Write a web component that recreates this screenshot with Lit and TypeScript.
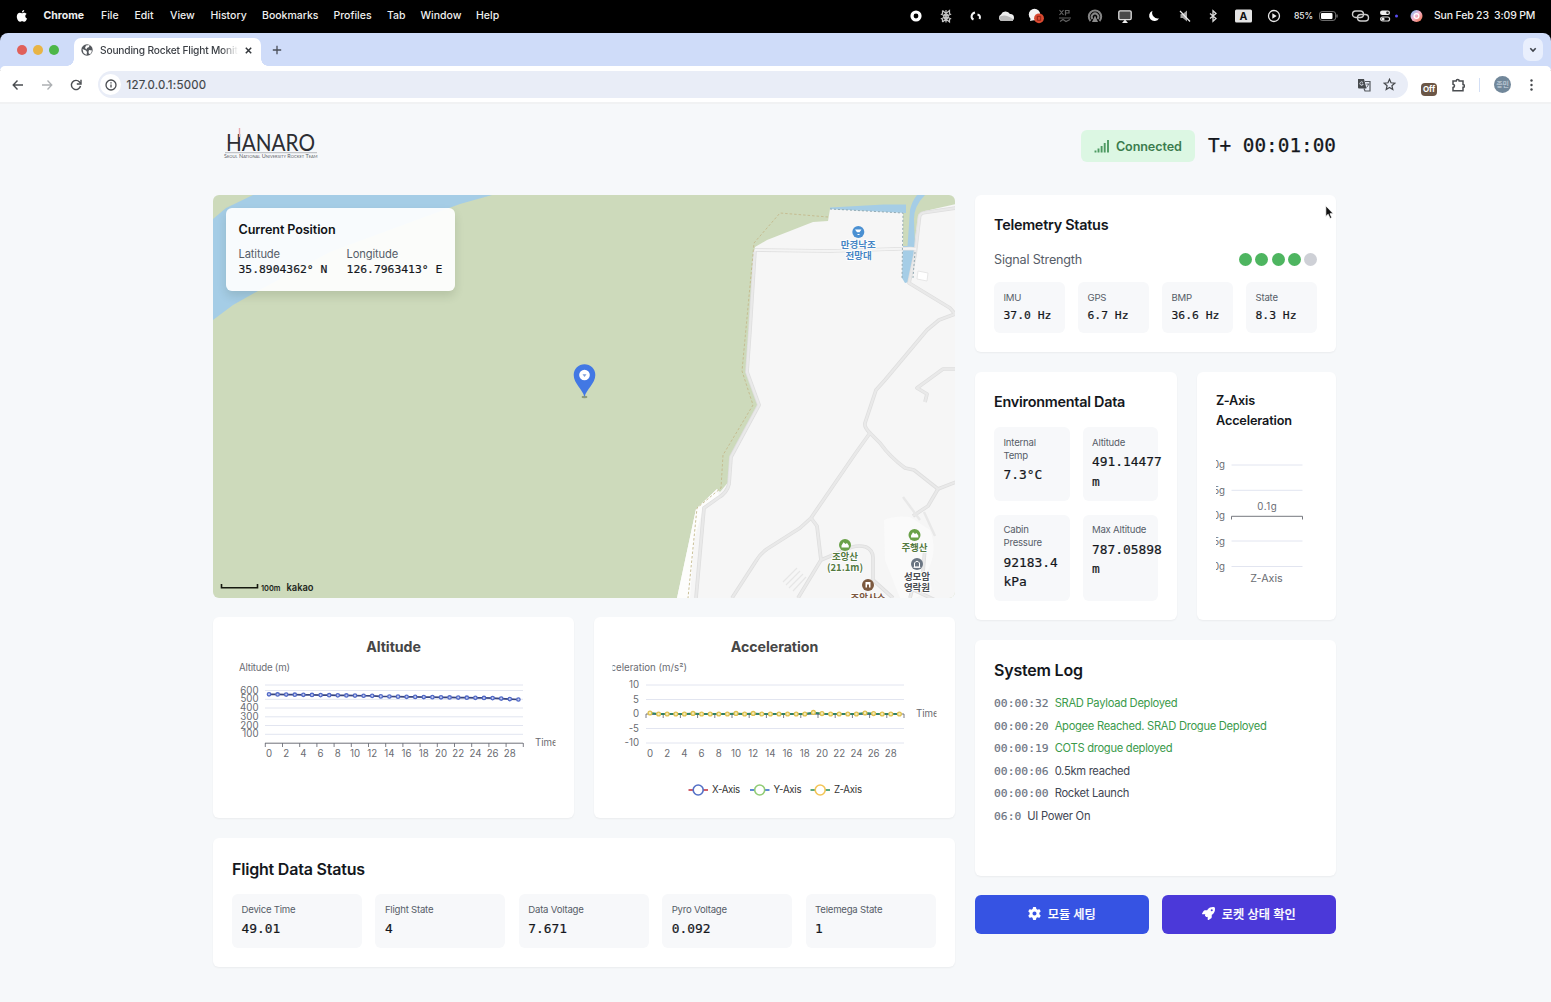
import { LitElement, html, svg, css } from "lit";
import { customElement } from "lit/decorators.js";
import { styleMap } from "lit/directives/style-map.js";

const base = css`
  * { box-sizing: border-box; }
  svg { display: block; }
  text { font-family: Inter, "Noto Sans CJK KR", sans-serif; }
`;

const MENUS: [string, number][] = [
  ["Chrome", 57.5], ["File", 33.5], ["Edit", 35.5], ["View", 40.5], ["History", 51.5],
  ["Bookmarks", 71.5], ["Profiles", 53.5], ["Tab", 33.5], ["Window", 55.5], ["Help", 30],
];

const STATUS_ICONS = [
  svg`<circle cx="10" cy="10" r="4" fill="none" stroke="#fff" stroke-width="3.2"/>`,
  svg`<g fill="none" stroke="#c4c4c4" stroke-width="1.2"><circle cx="10" cy="10.500" r="2.300"/><path d="M10 4v12.500M4.800 8l10.400 5M4.800 13l10.400-5M6.500 4.500l3.500 3 3.500-3v3.500M6.500 4.500v3.500M6.500 16l3.500-3 3.500 3v-3M6.500 16v-3"/></g>`,
  svg`<path d="M9 6.500c-4 1-4.500 5.500-1.500 7M11.500 8.500c2.500.5 3 2.500 2 4.500" fill="none" stroke="#f4f4f4" stroke-width="2"/>`,
  svg`<path d="M5 15a3.600 3.600 0 0 1 0-6.500A5 5 0 0 1 14 8a3.600 3.600 0 0 1 1.500 7z" fill="#eee"/><path d="M3 11q6-4 14 2v2H5z" fill="#bbb"/>`,
  svg`<circle cx="8.500" cy="8.500" r="5.700" fill="#f4f4f4"/><path d="M4 15l1-4 4 3z" fill="#f4f4f4"/><circle cx="13" cy="12.300" r="4.900" fill="#d94a31"/><path d="M11.300 10.300h3.400v4h-3.400z" fill="none" stroke="#8f2114" stroke-width="1"/>`,
  svg`<g fill="none" stroke="#626262" stroke-width="1.200"><path d="M4.500 4l4 5M8.500 4l-4 5M10.500 9.500V4.500h3.500v2.500h-3.500M4 12h12M5 15.500l3-2 3 2 4-2"/></g>`,
  svg`<g fill="none" stroke="#858585" stroke-width="2"><path d="M5.500 15a6.200 6.200 0 1 1 9 0M7.500 13a3.300 3.300 0 1 1 5 0"/></g><path d="M10 9.500l3 6.500H7z" fill="#8b8b8b"/>`,
  svg`<rect x="3.800" y="4.800" width="12.400" height="8.800" rx="1.300" fill="#4a4a4a" stroke="#ddd" stroke-width="1.300"/><path d="M7 17l3-3.500 3 3.500z" fill="#eee"/>`,
  svg`<path d="M7.500 4.800a5.300 5.300 0 1 0 6.600 7.400A5.600 5.600 0 0 1 7.500 4.800z" fill="#fff"/>`,
  svg`<path d="M5.500 8h2.300L12 4.500v11L7.800 12H5.500z" fill="#a5a5a5"/><path d="M5 5l10 10.500" stroke="#eee" stroke-width="1.200"/>`,
  svg`<path d="M5 7.500l6 5-3 2.700V4.800l3 2.700-6 5" fill="none" stroke="#ddd" stroke-width="1.300"/>`,
  svg`<rect x="0" y="3.500" width="17" height="13" rx="1.500" fill="#e4e4e4"/><text x="8.500" y="13.900" text-anchor="middle" font-size="10.500" font-weight="700" fill="#111">A</text>`,
  svg`<circle cx="9" cy="10" r="5.500" fill="none" stroke="#e8e8e8" stroke-width="1.300"/><path d="M7.300 7.200l4.400 2.800-4.400 2.800z" fill="#eee"/>`,
];

@customElement("mac-menubar")
class MacMenubar extends LitElement {
  static styles = [base, css`
    :host { display: flex; height: 33px; background: #000; color: #efefef; align-items: center;
      font: 500 10.500px/32px Inter, sans-serif; padding-bottom: 2px; white-space: nowrap; }
    .apple { width: 43.500px; padding-left: 14.500px; }
    .menu { flex: none; }
    .menu:first-of-type { font-weight: 700; }
    .spacer { flex: 1; }
    .status { display: flex; width: 393px; }
    .cell { width: 29.9px; display: flex; justify-content: center; }
    .pct { font-size: 8.600px; width: 25px; letter-spacing: -.1px; }
    .batt { width: 32px; }
    .link { width: 28px; }
    .ctl { width: 31px; }
    .siri { width: 24px; }
    .clock { width: 117px; letter-spacing: -.17px; white-space: pre; }
  `];
  render() {
    return html`
      <div class="apple"><svg width="14" height="14" viewBox="0 0 14 14"><path fill="#fff" d="M9.200 1c.1 1.300-1 2.500-2.300 2.500C6.800 2.200 8 1.100 9.200 1zM7 4.200c.6 0 1.200-.5 2.200-.5 1.100 0 2 .6 2.400 1.300-2 1.200-1.600 3.800.5 4.600-.5 1.400-1.600 3.200-2.800 3.200-.8 0-1.200-.5-2.200-.5s-1.400.5-2.200.5C3.400 12.800 1.800 10 1.800 7.600c0-2.400 1.500-3.800 3-3.800.9 0 1.600.4 2.200.4z"/></svg></div>
      ${MENUS.map(([t, w]) => html`<span class="menu" style=${styleMap({ width: w + "px" })}>${t}</span>`)}
      <div class="spacer"></div>
      <div class="status">${STATUS_ICONS.map((i) => html`<div class="cell"><svg width="20" height="20" viewBox="0 0 20 20">${i}</svg></div>`)}</div>
      <span class="pct">85%</span>
      <svg class="batt" width="32" height="12" viewBox="0 0 32 12"><rect x=".6" y="1.600" width="16" height="8.800" rx="2.500" fill="none" stroke="#777"/><rect x="2" y="3" width="11.500" height="6" rx="1" fill="#fff"/><path d="M18 4.500v3" stroke="#777" stroke-width="1.300"/></svg>
      <svg class="link" width="28" height="14" viewBox="0 0 28 14"><g fill="none" stroke="#ccc" stroke-width="1.400"><rect x="1.500" y="2" width="11" height="6.500" rx="3.200"/><rect x="6.500" y="5.500" width="11" height="6.500" rx="3.200"/></g></svg>
      <svg class="ctl" width="31" height="14" viewBox="0 0 31 14"><rect x="1" y="1.500" width="10" height="4.500" rx="2.200" fill="#eee"/><circle cx="8.500" cy="3.700" r="1.300" fill="#222"/><rect x="1.600" y="8" width="9" height="4" rx="2" fill="none" stroke="#ddd" stroke-width="1.200"/><circle cx="4" cy="10" r="1.600" fill="#eee"/><circle cx="17.500" cy="7" r="1.500" fill="#5a4df0"/></svg>
      <svg class="siri" width="24" height="14" viewBox="0 0 24 14"><defs><linearGradient id="s" x1="0" y1="0" x2="1" y2="1"><stop offset="0" stop-color="#5fb4f5"/><stop offset=".45" stop-color="#f3b6d4"/><stop offset="1" stop-color="#ef6a3b"/></linearGradient></defs><circle cx="6.500" cy="7" r="6" fill="url(#s)"/><circle cx="6.500" cy="7" r="2.400" fill="none" stroke="#fff" stroke-width="1.200"/></svg>
      <span class="clock">Sun Feb 23  3:09 PM</span>`;
  }
}

@customElement("browser-chrome")
class BrowserChrome extends LitElement {
  static styles = [base, css`
    :host { display: block; background: #000; font-family: Inter, sans-serif; }
    .strip { height: 37px; background: #cfdcf9; border-radius: 8px 8px 0 0; display: flex; align-items: flex-start; padding: 5px 7px 0 16.500px; margin-bottom: -4px; }
    .lights { display: flex; gap: 6.300px; padding-top: 7px; width: 57.500px; }
    .light { width: 10px; height: 10px; border-radius: 50%; background: #e0605a; }
    .light:nth-child(2) { background: #e8b445; }
    .light:nth-child(3) { background: #4db748; }
    .tab { width: 187px; height: 28px; background: #fff; border-radius: 7px 7px 0 0; display: flex; align-items: center; padding: 0 7px; position: relative; }
    .tab::before, .tab::after { content: ""; position: absolute; bottom: 0; width: 7px; height: 7px; }
    .tab::before { left: -7px; background: radial-gradient(circle at 0 0, transparent 6.500px, #fff 7px); }
    .tab::after { right: -7px; background: radial-gradient(circle at 100% 0, transparent 6.500px, #fff 7px); }
    .fav { margin-top: -4px; }
    .title { flex: 1; min-width: 0; font-size: 10.200px; letter-spacing: -.17px; font-weight: 500; color: #3b3f45; margin: -4px 6px 0 7px; overflow: hidden; white-space: nowrap;
      -webkit-mask-image: linear-gradient(90deg, #000 88%, transparent 100%); }
    .x { margin: -4px 1px 0 0; }
    .plus { margin: 7px 0 0 11px; }
    .spacer { flex: 1; }
    .drop { width: 20px; height: 23px; margin-right: 1px; border-radius: 7px; background: #e9effd; display: flex; align-items: center; justify-content: center; }
    .bar { height: 38px; background: #fff; border-bottom: 2px solid #f1f2f3; border-radius: 5px 5px 0 0; display: flex; align-items: center; padding: 1px 12px 0 11px; position: relative; }
    .nav { display: flex; gap: 15px; width: 87px; }
    .omni { width: 1310px; height: 27px; border-radius: 14px; background: #e9edf7; display: flex; align-items: center; padding: 0 12px 0 2px; }
    .info { width: 21px; height: 21px; border-radius: 50%; background: #fff; display: flex; align-items: center; justify-content: center; }
    .url { flex: 1; font-size: 11.600px; color: #414549; padding-left: 5.500px; letter-spacing: .25px; -webkit-text-stroke: .15px #414549; }
    .star { margin-left: 12px; }
    .right { flex: 1; display: flex; align-items: center; justify-content: space-between; padding-left: 13px; }
    .off { width: 16px; height: 13px; margin-top: 9px; border-radius: 4px; background: #6b5646; color: #fff; font: 700 8px/13px Inter, sans-serif; text-align: center; }
    .sep { width: 1.500px; height: 14px; background: #d3dff5; }
    .avatar { width: 17px; height: 17px; border-radius: 50%; background: #71879a; color: #b7c4d0; font: 600 7px/16px "Noto Sans CJK KR", sans-serif; text-align: center; }
  `];
  render() {
    return html`
      <div class="strip">
        <div class="lights"><i class="light"></i><i class="light"></i><i class="light"></i></div>
        <div class="tab">
          <svg class="fav" width="12" height="12" viewBox="0 0 12 12"><circle cx="6" cy="6" r="5.700" fill="#53575c"/><path d="M1.500 5l3.500 1.500 1 1.500-.5 3L2.500 9zM5 1.500L8.500 1 8 3 6 4 5.500 5.500 4 4zM8 6l3 .5-1 3-2 .5-.5-2z" fill="#fff"/></svg>
          <span class="title">Sounding Rocket Flight Monitor</span>
          <svg class="x" width="9" height="9" viewBox="0 0 9 9"><path d="M1.800 1.800l5.400 5.400M7.200 1.800L1.800 7.200" stroke="#33373b" stroke-width="1.500"/></svg>
        </div>
        <svg class="plus" width="10" height="10" viewBox="0 0 10 10"><path d="M5 .8v8.400M.8 5h8.400" stroke="#4a4e58" stroke-width="1.300"/></svg>
        <div class="spacer"></div>
        <div class="drop"><svg width="8" height="6" viewBox="0 0 8 6"><path d="M1.300 1.300L4 4l2.700-2.700" fill="none" stroke="#3e434b" stroke-width="1.600"/></svg></div>
      </div>
      <div class="bar">
        <div class="nav">
          <svg width="14" height="14" viewBox="0 0 14 14"><path d="M12 7H2.500M6.500 2.500L2.200 7l4.300 4.500" fill="none" stroke="#4a4d51" stroke-width="1.400"/></svg>
          <svg width="14" height="14" viewBox="0 0 14 14"><path d="M2 7h9.500M7.500 2.500L11.800 7l-4.300 4.500" fill="none" stroke="#adb0b3" stroke-width="1.300"/></svg>
          <svg width="14" height="14" viewBox="0 0 14 14"><path d="M11.500 8A4.600 4.600 0 1 1 10.500 4L11.700 5.200" fill="none" stroke="#4a4d51" stroke-width="1.400"/><path d="M12 1.800V6H7.800" fill="none" stroke="#4a4d51" stroke-width="1.400"/></svg>
        </div>
        <div class="omni">
          <div class="info"><svg width="12" height="12" viewBox="0 0 12 12"><circle cx="6" cy="6" r="5" fill="none" stroke="#4a4d51" stroke-width="1.300"/><path d="M6 5.400v3.200M6 3.200v1.200" stroke="#4a4d51" stroke-width="1.300"/></svg></div>
          <span class="url">127.0.0.1:5000</span>
          <svg width="14" height="14" viewBox="0 0 14 14"><path d="M1 1h6l2.500 9.500H2a1 1 0 0 1-1-1z" fill="#474a4e"/><path d="M8 3.500h5v9.500H8l-1-2.500" fill="none" stroke="#54585d" stroke-width="1.200"/><path d="M6 4.600A1.700 1.700 0 1 0 6.200 6.200H4.800" fill="none" stroke="#dde1ea" stroke-width=".9"/><path d="M9.300 6h3M11.500 6q-.5 2-2 3.500" stroke="#54585d" fill="none" stroke-width=".9"/></svg>
          <svg class="star" width="13" height="13" viewBox="0 0 13 13"><path d="M6.500 1.300l1.500 3.500 3.800.4-2.900 2.500.9 3.800-3.300-2-3.300 2 .9-3.800L1.200 5.200 5 4.800z" fill="none" stroke="#44474b" stroke-width="1.200"/></svg>
        </div>
        <div class="right">
          <div class="off">Off</div>
          <svg width="14" height="14" viewBox="0 0 14 14"><path d="M2 3h3.200a1.500 1.500 0 0 1 3 0H12v3.500a1.300 1.300 0 0 1 0 2.800V12.700H2V9.500c2-.3 2-3 0-3.300z" fill="none" stroke="#4a4d51" stroke-width="1.500"/></svg>
          <div class="sep"></div>
          <div class="avatar">종민</div>
          <svg width="14" height="14" viewBox="0 0 14 14"><g fill="#44474b"><circle cx="6.500" cy="2.500" r="1.200"/><circle cx="6.500" cy="7" r="1.200"/><circle cx="6.500" cy="11.500" r="1.200"/></g></svg>
        </div>
      </div>`;
  }
}

const LAND = "M830 209L828 221L813 222L767 240L755 247L753 260L747 373L759 405L731 457L730 480L720 492L717 489L696 509L677 598H956V204L925 211L918 215L914 245L903 250L903 212Z";
const ROADS = [
  "M755 250L830 251L910 248.500L916 249",
  "M755 250L750 330L747 372L759 405L731 457L729 484Q727 493 718 498L704 508L696 598",
  "M956 208L925 212.500Q920 213 919.500 217L915 255L909 283L950 308L956 315",
  "M955 314L939 320L927 330L885 380L876 390L865 423Q864 427 870 433",
  "M956 369H943L917 388L927 394L925 402",
  "M870 433L855 454L811 518L800 528L767 549Q760 554 756 561L732 598",
  "M870 433L880 443Q890 457 905 468L914 470L938 489L956 482",
  "M938 489L928 506L913 516",
  "M811 518L817 526L821 560L798 598",
  "M821 560L845 550Q856 544 866 547Q873 550 873 558V580L893 598",
  "M910 598L914 583M914 590L935 600M925 548L923 572",
];
const LANES = "M903 497L920 520M924 512L935 536";

const peak = (x: number, y: number) => svg`<circle cx=${x} cy=${y} r="6" fill="#6aa149"/><path d=${`M${x - 3.5} ${y + 2.5}v-2l2-3.200 2 1.700 1.500-1 1.800 2.500v2z`} fill="#fff"/>`;

@customElement("flight-map")
class FlightMap extends LitElement {
  static styles = [base, css`
    :host { display: block; height: 403px; position: relative; border-radius: 6px; overflow: hidden; font-family: Inter, sans-serif; }
    .ko { font-family: "Noto Sans CJK KR", sans-serif; font-weight: 700; text-anchor: middle; paint-order: stroke; stroke: #fff; stroke-width: 1.500px; font-size: 9.500px; }
    .card { position: absolute; left: 13px; top: 13px; width: 229px; height: 83px; border-radius: 6px; background: rgba(255,255,255,.92); box-shadow: 0 5px 10px rgba(40,60,30,.14); padding: 11.500px 12.500px; }
    .title { font-weight: 600; font-size: 12.600px; line-height: 20px; color: #101318; letter-spacing: -.1px; }
    .cols { display: flex; gap: 19.300px; margin-top: 7px; line-height: 15.500px; }
    .label { font-size: 11.200px; letter-spacing: -.15px; color: #565d68; }
    .value { font: 11.350px/15.500px "DejaVu Sans Mono", monospace; color: #15181d; white-space: pre; -webkit-text-stroke: .2px; }
  `];
  render() {
    return html`
      <svg width="742" height="403" viewBox="213 195 742 403">
        <rect x="213" y="195" width="742" height="403" fill="#cddabb"/>
        <path d="M213 219L226 208L253 195H492L460 204L330 252L258 291L233 305L213 320Z" fill="#a5cde6"/>
        <path d="M906 204H926V240H906z" fill="#cddabb"/>
        <path d=${LAND} fill="#f6f6f6"/>
        <path d="M696 509L717 489L719 496L704 506L694 540L690 598H677Z" fill="#fdfdfc"/>
        <path d="M884 520Q895 515 910 517L930 530Q938 550 928 570L932 590L915 598H900L885 560Z" fill="#fafafa"/>
        <path d="M903 212V205L918 199V215L914 245H903z" fill="#cddabb"/>
        <path d="M830 207.500L884 204.500H906V213L830 209z" fill="#a5cde6"/>
        <path d="M917 195H925Q914 206 914 219L915 248L912 270L909 282L905 283L902 278L903 246H907.500L910 210Q912 201 917 195z" fill="#a5cde6"/>
        <g fill="none" stroke-linejoin="round">
          ${ROADS.map((d) => svg`<path d=${d} stroke="#dedede" stroke-width="3.700"/>`)}
          ${ROADS.map((d) => svg`<path d=${d} stroke="#e9e9e9" stroke-width="2.200"/>`)}
          <path d=${LANES} stroke="#e8e8e8" stroke-width="2.400"/>
          <path d="M755 250L830 251L910 248.500L916 249" stroke="#f4f4f4" stroke-width="1.800"/>
          <path d="M828 217L780 213L754 243L742 371L753 405L723 455L721 488L697 508L688 598" stroke="#c4b98c" stroke-width=".9" stroke-dasharray="2.500 2"/>
          <path d="M830 209L903 213L902 278M915 252L913 278" stroke="#8aa3ad" stroke-width=".9" stroke-dasharray="2 2"/>
          <path d="M783 582L797 568M786 585L800 571M789 588L803 574M793 591L806 577" stroke="#e6e6e6" stroke-width="1.200"/>
        </g>
        <path d="M918 271l10 2-1 8-10-2z" fill="#fff" stroke="#e2e2e2" stroke-width=".8"/>
        <circle cx="858.300" cy="232" r="6" fill="#4a90d2"/><path d="M855 229.500h6.500l-2 2.800h-2.500zM857.500 234h2v1h-2z" fill="#fff"/>
        <text class="ko" x="858.300" y="248" fill="#4585c4">만경낙조</text>
        <text class="ko" x="858.600" y="258.700" fill="#4585c4">전망대</text>
        ${peak(845, 545)}${peak(914.5, 535)}
        <text class="ko" x="845" y="560.300" fill="#53793f">조앙산</text>
        <text class="ko" x="845" y="571" fill="#53793f">(21.1m)</text>
        <text class="ko" x="914.500" y="551" fill="#53793f">주행산</text>
        <circle cx="917" cy="564" r="6" fill="#6b7683"/><path d="M914.500 567v-4q2.500-3.500 5 0v4zM913.500 567.300h7" fill="#6b7683" stroke="#fff" stroke-width="1"/>
        <text class="ko" x="917" y="580" fill="#4a4d52">성모암</text>
        <text class="ko" x="917" y="590.500" fill="#4a4d52">영락원</text>
        <circle cx="868" cy="585" r="6" fill="#7c593f"/><path d="M865.500 582h5v5.500h-1.500v-3h-2v3h-1.500z" fill="#fff"/>
        <text class="ko" x="868" y="600.500" fill="#7c593f">조앙사스</text>
        <ellipse cx="584.500" cy="397" rx="3" ry="1.200" fill="#8e9b79"/>
        <path d="M584.500 397C582.500 389 573.700 383.500 573.700 375a10.800 10.800 0 0 1 21.600 0C595.300 383.500 586.500 389 584.500 397z" fill="#4278e4"/>
        <circle cx="584.500" cy="375" r="5.300" fill="#fff"/><path d="M582.500 374.300h4l-2 2.700z" fill="#7e9fd9"/>
        <path d="M221.500 584V587.700H257.500V584" fill="none" stroke="#16180f" stroke-width="1.600"/>
        <text x="261" y="590.600" font-size="8" font-weight="600" fill="#22261b" textLength="19.500" lengthAdjust="spacingAndGlyphs">100m</text>
        <text x="286.500" y="590.700" font-size="9.800" font-weight="600" fill="#22261b" textLength="27" lengthAdjust="spacingAndGlyphs">kakao</text>
      </svg>
      <div class="card">
        <div class="title">Current Position</div>
        <div class="cols">
          <div><div class="label">Latitude</div><div class="value">35.8904362° N</div></div>
          <div><div class="label">Longitude</div><div class="value">126.7963413° E</div></div>
        </div>
      </div>`;
  }
}

const chartStyles = css`
  :host { display: block; }
  .t { font-weight: 700; font-size: 14.200px; fill: #464646; text-anchor: middle; letter-spacing: -.05px; }
  .a { font-size: 9.700px; fill: #6a6c72; }
  .e { text-anchor: end; }
  .m { text-anchor: middle; }
  .l { font-size: 9.700px; fill: #333; }
`;
const idx = (n: number) => Array.from({ length: n }, (_, i) => i);
const ALT = idx(30).map((i) => 694.3 + i * 0.13 + (i > 12 ? 0.4 : 0) + (i > 26 ? (i - 26) * 0.35 : 0));
const BUMP: Record<number, number> = { 0: -1, 5: -0.6, 10: -0.6, 12: -0.6, 19: -1.6, 20: -0.4, 25: -1, 26: -0.4 };
const ACC = idx(30).map((i) => 714 + (BUMP[i] ?? 0));
const line = (ys: number[], x0: number) => ys.map((y, i) => `${i ? "L" : "M"}${x0 + i * 8.6} ${y}`).join("");

@customElement("altitude-chart")
class AltitudeChart extends LitElement {
  static styles = [base, chartStyles];
  render() {
    return html`<svg width="361" height="201" viewBox="213 617 361 201">
      <clipPath id="c"><rect x="232" y="637" width="323.500" height="162"/></clipPath>
      <text class="t" x="393.500" y="652">Altitude</text>
      <text class="a" x="239" y="671" textLength="51">Altitude (m)</text>
      ${[685, 690.5, 699.3, 708, 716.8, 725.5, 734.3].map((y) => svg`<path d=${`M265 ${y}H523`} stroke="#e2e5f0"/>`)}
      ${[600, 500, 400, 300, 200, 100].map((v, i) => svg`<text class="a e" x="258.500" y=${693.7 + i * 8.75}>${v}</text>`)}
      <path d="M265 743.200H523" stroke="#6e7079"/>
      ${idx(16).map((i) => svg`<path d=${`M${265.3 + i * 17.2} 743v4`} stroke="#6e7079" stroke-width=".9"/>`)}
      ${idx(15).map((i) => svg`<text class="a m" x=${269 + i * 17.2} y="757.300">${i * 2}</text>`)}
      <text class="a" x="535" y="745.700" clip-path="url(#c)">Time</text>
      <path d=${line(ALT, 269)} fill="none" stroke="#38457f" stroke-width="1.700"/>
      ${ALT.map((y, i) => svg`<circle cx=${269 + i * 8.6} cy=${y} r="1.700" fill="#c5cdf0" stroke="#5068c6" stroke-width="1.300"/>`)}
    </svg>`;
  }
}

@customElement("acceleration-chart")
class AccelerationChart extends LitElement {
  static styles = [base, chartStyles];
  render() {
    const legend: [string, number, string, string][] = [["X-Axis", 688.5, "#c9434f", "#5470c6"], ["Y-Axis", 750, "#4377cf", "#91cc75"], ["Z-Axis", 810.5, "#3f9a6a", "#f3c557"]];
    return html`<svg width="361" height="201" viewBox="594 617 361 201">
      <clipPath id="c"><rect x="612.500" y="637" width="324" height="162"/></clipPath>
      <text class="t" x="774.500" y="652">Acceleration</text>
      <text class="a e" x="687" y="671" clip-path="url(#c)">Acceleration (m/s²)</text>
      ${[685, 699.5, 728.5, 743].map((y) => svg`<path d=${`M646 ${y}H904`} stroke="#e2e5f0"/>`)}
      ${[10, 5, 0, -5, -10].map((v, i) => svg`<text class="a e" x="639" y=${688.3 + i * 14.5}>${v}</text>`)}
      <path d="M646 714H904" stroke="#6e7079"/>
      ${idx(16).map((i) => svg`<path d=${`M${646 + i * 17.2} 714v4`} stroke="#6e7079" stroke-width=".9"/>`)}
      ${idx(15).map((i) => svg`<text class="a m" x=${650 + i * 17.2} y="757.300">${i * 2}</text>`)}
      <text class="a" x="916" y="717.300" clip-path="url(#c)">Time</text>
      <path d=${line(ACC.map((y) => 714 + (y - 714) * 0.5), 650)} fill="none" stroke="#2f5f8f" stroke-width="1.800"/>
      <path d=${line(ACC, 650)} fill="none" stroke="#2f8a5c" stroke-width="1.500"/>
      ${ACC.map((y, i) => svg`<circle cx=${650 + i * 8.6} cy=${y} r="1.900" fill="#f6ecb8" stroke="#dfc04f" stroke-width="1.300"/>`)}
      ${legend.map(([t, x, c, r]) => svg`<path d=${`M${x} 790h19.500`} stroke=${c} stroke-width="1.700"/><circle cx=${x + 9.7} cy="790" r="5" fill="#fff" stroke=${r} stroke-width="1.600"/><text class="l" x=${x + 23.5} y="793.300" textLength="28">${t}</text>`)}
    </svg>`;
  }
}

@customElement("zaxis-chart")
class ZaxisChart extends LitElement {
  static styles = [base, chartStyles];
  render() {
    return html`<svg width="101" height="150" viewBox="1216 450 101 150">
      ${[465, 490.3, 541, 566.5].map((y) => svg`<path d=${`M1231.500 ${y}H1302.500`} stroke="#e2e5f0"/>`)}
      ${["10g", "5g", "0g", "-5g", "-10g"].map((v, i) => svg`<text class="a e" x="1225" y=${468 + i * 25.5}>${v}</text>`)}
      <path d="M1231.500 519.500V516.300H1302.500V519.500" fill="none" stroke="#76787f"/>
      <text class="a m" x="1267" y="509.500" fill="#444" textLength="19.500">0.1g</text>
      <text class="a m" x="1266.500" y="581.700" textLength="32.500" lengthAdjust="spacingAndGlyphs">Z-Axis</text>
    </svg>`;
  }
}

const LOG: [string, string, boolean][] = [
  ["00:00:32", "SRAD Payload Deployed", true],
  ["00:00:20", "Apogee Reached. SRAD Drogue Deployed", true],
  ["00:00:19", "COTS drogue deployed", true],
  ["00:00:06", "0.5km reached", false],
  ["00:00:00", "Rocket Launch", false],
  ["06:0", "UI Power On", false],
];

@customElement("app-root")
class AppRoot extends LitElement {
  static styles = [base, css`
    :host { display: block; width: 1551px; height: 1002px; overflow: hidden; background: #f6f8fa; position: relative; font-family: Inter, "Noto Sans CJK KR", sans-serif; color: #14171c; }
    .page { width: 1123px; margin-left: 213px; }
    .top { height: 91px; display: flex; align-items: center; padding: 0 0 7px 11px; }
    .spacer { flex: 1; }
    .logo { margin: -4px 0 0 -4px; }
    .pill { width: 114.500px; height: 32px; border-radius: 6px; background: #dcf7e3; color: #3b7c4e; display: flex; align-items: center; gap: 6px; padding-left: 13px; font-weight: 600; font-size: 12.600px; letter-spacing: -.1px; }
    .clock { font: 19.350px/24px "DejaVu Sans Mono", monospace; margin-left: 12.500px; white-space: pre; -webkit-text-stroke: .25px; }
    .grid { display: grid; grid-template-columns: 742px 361px; column-gap: 20px; }
    .col { display: flex; flex-direction: column; }
    .card { background: #fff; border-radius: 6px; box-shadow: 0 1px 2px rgba(0,0,0,.05); }
    .charts { display: grid; grid-template-columns: 1fr 1fr; gap: 20px; margin: 19px 0 20px; }
    .flight { height: 128.500px; padding: 19.600px 19px; }
    .h { margin: 0; font-weight: 600; font-size: 14.400px; line-height: 22px; letter-spacing: -.25px; }
    .h.big { font-size: 16px; line-height: 23px; letter-spacing: -.2px; }
    .h.sm { font-size: 12.700px; line-height: 19.500px; letter-spacing: -.15px; }
    .cells5 { display: grid; grid-template-columns: repeat(5, 130px); gap: 13.400px; margin-top: 13.200px; }
    .cell { background: #f7f8fa; border-radius: 6px; padding: 8.800px 9px 9.700px 9.500px; }
    .label { font-size: 9.600px; letter-spacing: -.22px; line-height: 13px; color: #565d68; }
    .val { font: 12.900px/19.500px "DejaVu Sans Mono", monospace; margin-top: 3.500px; -webkit-text-stroke: .2px; }
    .val.s { font-size: 11.350px; line-height: 16px; margin-top: 3px; }
    .tele { height: 157px; padding: 19px; }
    .signal { display: flex; justify-content: space-between; align-items: center; height: 20px; margin: 13px 0; font-size: 12.600px; color: #565d68; letter-spacing: -.18px; }
    .dots { display: flex; gap: 3.200px; }
    .dot { width: 13px; height: 13px; border-radius: 50%; background: #4eb560; }
    .dot.off { background: #ced0d6; }
    .cells4 { display: grid; grid-template-columns: repeat(4, 71px); gap: 13px; }
    .cells4 .cell { height: 51px; }
    .pair { display: grid; grid-template-columns: 202px 139px; gap: 20px; margin: 20px 0; height: 248px; }
    .env, .z { padding: 19px; }
    .cells2 { display: grid; grid-template-columns: 75.500px 75.500px; grid-template-rows: 74px 86px; gap: 13.500px 13px; margin-top: 14px; }
    .chart { margin-top: 20px; }
    .log { height: 236px; padding: 19px; }
    .rows { margin-top: 10px; }
    .row { display: flex; gap: 6px; height: 22.600px; line-height: 22.600px; font-size: 11.200px; letter-spacing: -.29px; color: #3f4653; white-space: nowrap; }
    .row.ok { color: #3b9a4b; }
    .time { font: 11.350px/22.600px "DejaVu Sans Mono", monospace; letter-spacing: 0; color: #6b7280; -webkit-text-stroke: .15px; }
    .buttons { display: grid; grid-template-columns: 1fr 1fr; gap: 13px; margin-top: 18.500px; }
    .btn { height: 39px; border-radius: 6px; background: #3653e3; color: #fff; display: flex; align-items: center; justify-content: center; gap: 6.500px; font-size: 12.200px; font-weight: 500; padding-bottom: 1px; -webkit-text-stroke: .2px; }
    .btn.alt { background: #4b39d9; }
    .cursor { position: absolute; left: 1325px; top: 205px; }
    .hanaro { font-family: Lato, sans-serif; }
    .sub { font-variant: small-caps; }
  `];
  private cell(label: string, value: string, small = false) {
    return html`<div class="cell"><div class="label">${label}</div><div class="val ${small ? "s" : ""}">${value}</div></div>`;
  }
  render() {
    return html`
      <mac-menubar></mac-menubar>
      <browser-chrome></browser-chrome>
      <div class="page">
        <div class="top">
          <svg class="logo" width="104" height="44" viewBox="220 122 104 44">
            <text class="hanaro" x="226" y="151" font-size="23.500" fill="#2c2e33" textLength="89" lengthAdjust="spacingAndGlyphs">HANARO</text>
            <path d="M239.500 128V137" stroke="#e7a9ad" stroke-width="1.400"/>
            <path d="M225 152.700H317" stroke="#9a9ca1" stroke-width=".7"/>
            <text class="hanaro sub" x="224" y="158" font-size="5.400" fill="#606268" textLength="93.500" lengthAdjust="spacingAndGlyphs">Seoul National University Rocket Team</text>
          </svg>
          <div class="spacer"></div>
          <div class="pill">
            <svg width="16" height="14" viewBox="0 0 16 14"><path d="M1.500 13.500v-2M4.500 13.500v-4M7.600 13.500V7M10.700 13.500V4M14 13.500V1" stroke="#4d9a62" stroke-width="1.900"/></svg>
            Connected
          </div>
          <div class="clock">T+ 00:01:00</div>
        </div>
        <div class="grid">
          <div class="col">
            <flight-map></flight-map>
            <div class="charts">
              <div class="card"><altitude-chart></altitude-chart></div>
              <div class="card"><acceleration-chart></acceleration-chart></div>
            </div>
            <div class="card flight">
              <h2 class="h big">Flight Data Status</h2>
              <div class="cells5">
                ${this.cell("Device Time", "49.01")}${this.cell("Flight State", "4")}${this.cell("Data Voltage", "7.671")}${this.cell("Pyro Voltage", "0.092")}${this.cell("Telemega State", "1")}
              </div>
            </div>
          </div>
          <div class="col">
            <div class="card tele">
              <h2 class="h">Telemetry Status</h2>
              <div class="signal">Signal Strength<div class="dots">${idx(5).map((i) => html`<i class="dot ${i === 4 ? "off" : ""}"></i>`)}</div></div>
              <div class="cells4">
                ${this.cell("IMU", "37.0 Hz", true)}${this.cell("GPS", "6.7 Hz", true)}${this.cell("BMP", "36.6 Hz", true)}${this.cell("State", "8.3 Hz", true)}
              </div>
            </div>
            <div class="pair">
              <div class="card env">
                <h2 class="h">Environmental Data</h2>
                <div class="cells2">
                  ${this.cell("Internal Temp", "7.3°C")}${this.cell("Altitude", "491.14477 m")}${this.cell("Cabin Pressure", "92183.4 kPa")}${this.cell("Max Altitude", "787.05898 m")}
                </div>
              </div>
              <div class="card z">
                <h2 class="h sm">Z-Axis Acceleration</h2>
                <zaxis-chart class="chart"></zaxis-chart>
              </div>
            </div>
            <div class="card log">
              <h2 class="h big">System Log</h2>
              <div class="rows">${LOG.map(([t, m, ok]) => html`<div class="row ${ok ? "ok" : ""}"><span class="time">${t}</span><span>${m}</span></div>`)}</div>
            </div>
            <div class="buttons">
              <div class="btn"><svg width="13" height="13" viewBox="0 0 512 512"><path fill="#fff" d="M495.900 166.600c3.200 8.700.5 18.400-6.400 24.600l-43.300 39.400c1.100 8.300 1.700 16.800 1.700 25.400s-.6 17.100-1.700 25.400l43.300 39.400c6.900 6.200 9.600 15.900 6.400 24.600-4.400 11.900-9.700 23.300-15.800 34.300l-4.700 8.100c-6.600 11-14 21.400-22.100 31.200-5.900 7.200-15.700 9.600-24.500 6.800l-55.700-17.700c-13.400 10.300-28.200 18.900-44 25.400l-12.500 57.100c-2 9.100-9 16.300-18.200 17.800-13.800 2.300-28 3.500-42.500 3.500s-28.700-1.200-42.500-3.500c-9.200-1.500-16.200-8.700-18.200-17.800l-12.500-57.100c-15.800-6.500-30.600-15.100-44-25.400L83.100 425.900c-8.800 2.800-18.600.3-24.500-6.800-8.100-9.800-15.500-20.200-22.100-31.200l-4.700-8.100c-6.100-11-11.400-22.400-15.800-34.300-3.200-8.700-.5-18.400 6.400-24.600l43.300-39.400C64.600 273.100 64 264.600 64 256s.6-17.100 1.700-25.400L22.400 191.200c-6.900-6.200-9.600-15.900-6.400-24.600 4.400-11.900 9.700-23.300 15.800-34.300l4.700-8.100c6.600-11 14-21.400 22.100-31.200 5.900-7.200 15.700-9.600 24.500-6.800l55.700 17.700c13.400-10.300 28.200-18.900 44-25.400l12.500-57.100c2-9.100 9-16.300 18.200-17.800C227.300 1.200 241.500 0 256 0s28.700 1.200 42.500 3.500c9.200 1.500 16.200 8.700 18.200 17.800l12.500 57.100c15.800 6.500 30.600 15.100 44 25.400l55.700-17.700c8.800-2.800 18.600-.3 24.500 6.800 8.100 9.800 15.500 20.200 22.100 31.200l4.700 8.100c6.100 11 11.400 22.400 15.800 34.300zM256 336a80 80 0 1 0 0-160 80 80 0 1 0 0 160z"/></svg>모듈 세팅</div>
              <div class="btn alt"><svg width="13" height="13" viewBox="0 0 512 512"><path fill="#fff" d="M156.600 384.900L125.700 354c-8.500-8.500-11.500-20.800-7.700-32.200 3-8.900 7-20.500 11.800-33.800H24c-8.600 0-16.600-4.600-20.900-12.100s-4.200-16.700.2-24.100l52.500-88.500c13-21.900 36.500-35.300 61.900-35.300H200c2.400-4 4.800-7.700 7.200-11.300C289.100-4.100 411.100-8.100 483.900 5.300c11.600 2.100 20.600 11.200 22.800 22.800 13.400 72.900 9.300 194.800-111.400 276.700-3.500 2.400-7.300 4.800-11.300 7.200v82.300c0 25.400-13.400 49-35.300 61.900l-88.500 52.500c-7.400 4.400-16.600 4.500-24.100.2s-12.100-12.200-12.100-20.900V380.800c-14.100 4.900-26.400 8.900-35.700 11.900-11.200 3.600-23.400.5-31.800-7.800zM384 168a40 40 0 1 0 0-80 40 40 0 1 0 0 80z"/></svg>로켓 상태 확인</div>
            </div>
          </div>
        </div>
      </div>
      <svg class="cursor" width="9" height="15" viewBox="0 0 9 15"><path d="M.8.800V11.500L3.200 9.300 5 13.500 6.800 12.700 5 8.700H8.300z" fill="#111" stroke="#fff" stroke-width=".8"/></svg>`;
  }
}
